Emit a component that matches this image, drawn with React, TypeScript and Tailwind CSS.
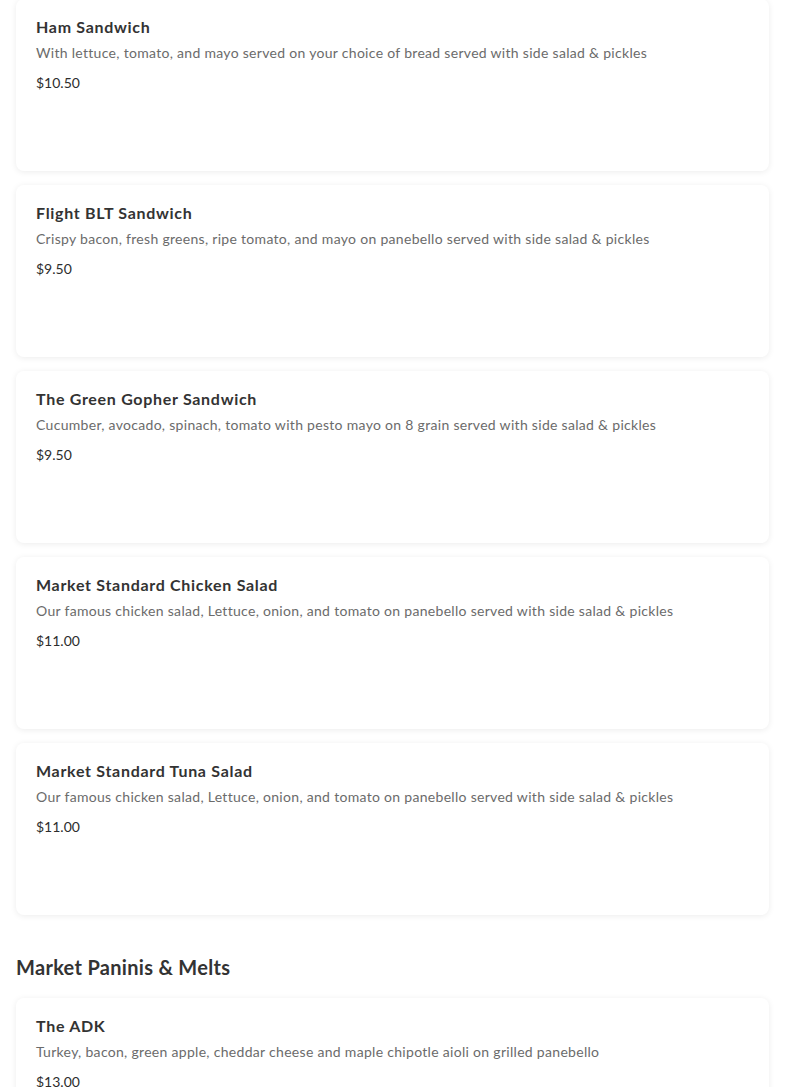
import React from "react";

const items1 = [
  { name: "Ham Sandwich", desc: "With lettuce, tomato, and mayo served on your choice of bread served with side salad & pickles", price: "$10.50" },
  { name: "Flight BLT Sandwich", desc: "Crispy bacon, fresh greens, ripe tomato, and mayo on panebello served with side salad & pickles", price: "$9.50" },
  { name: "The Green Gopher Sandwich", desc: "Cucumber, avocado, spinach, tomato with pesto mayo on 8 grain served with side salad & pickles", price: "$9.50" },
  { name: "Market Standard Chicken Salad", desc: "Our famous chicken salad, Lettuce, onion, and tomato on panebello served with side salad & pickles", price: "$11.00" },
  { name: "Market Standard Tuna Salad", desc: "Our famous chicken salad, Lettuce, onion, and tomato on panebello served with side salad & pickles", price: "$11.00" },
];

function Card({ name, desc, price }: { name: string; desc: string; price: string }) {
  return (
    <div className="h-[172px] rounded-lg bg-white px-5 pt-[17px] shadow-[0_1px_6px_rgba(0,0,0,0.08)]">
      <div className="text-[16px] font-bold leading-[22px] tracking-[0.7px] text-[#333333]">{name}</div>
      <div className="mt-[5px] text-[14px] leading-[20px] tracking-[0.3px] text-[#6b6b6b]">{desc}</div>
      <div className="mt-[10px] text-[14px] leading-[20px] text-[#2d2d2d]">{price}</div>
    </div>
  );
}

export default function App() {
  return (
    <div className="min-h-screen bg-white px-4 font-['Lato',sans-serif]" >
      <div className="-mt-px flex flex-col gap-[14px]">
        {items1.map((it) => (
          <Card key={it.name} {...it} />
        ))}
      </div>
      <h2 className="mt-[38px] text-[20px] font-bold leading-[28px] tracking-[0.3px] text-[#333333]">Market Paninis &amp; Melts</h2>
      <div className="mt-[17px] flex flex-col gap-[14px]">
        <Card name="The ADK" desc="Turkey, bacon, green apple, cheddar cheese and maple chipotle aioli on grilled panebello" price="$13.00" />
      </div>
    </div>
  );
}
